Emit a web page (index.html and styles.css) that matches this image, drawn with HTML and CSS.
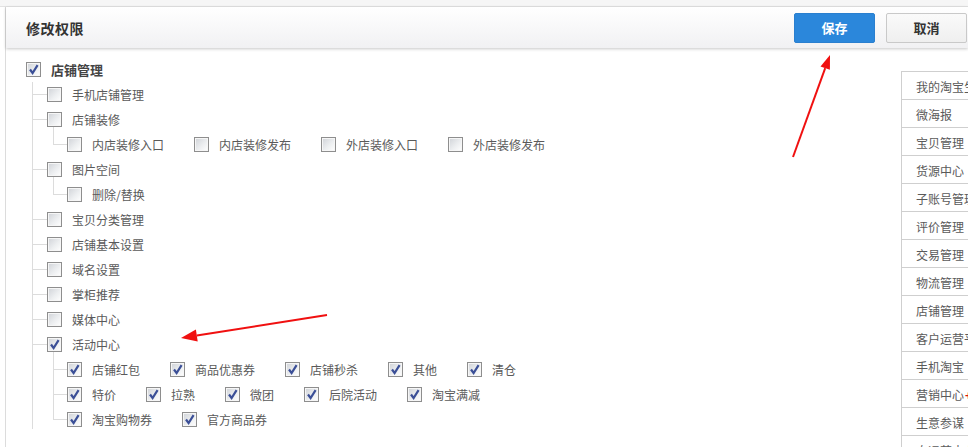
FILE: index.html
```html
<!DOCTYPE html>
<html lang="zh-CN">
<head>
<meta charset="utf-8">
<title>修改权限</title>
<link rel="stylesheet" href="styles.css">
</head>
<body>
<div class="topstrip"></div>
<div class="frame">
  <div class="header">
    <div class="title">修改权限</div>
    <div class="actions">
      <button class="btn save">保存</button>
      <button class="btn cancel">取消</button>
    </div>
  </div>
  <div class="content">
    <div class="tree">
      <div class="row root"><span class="cb on"><svg viewBox="0 0 13 13"><path d="M3 6.5 L5.6 10 L10.6 2.2"/></svg></span><span class="lbl bold">店铺管理</span></div>
      <ul class="l1">
        <li><div class="row"><span class="cb"></span><span class="lbl">手机店铺管理</span></div></li>
        <li><div class="row"><span class="cb"></span><span class="lbl">店铺装修</span></div>
          <ul class="l2">
            <li class="row">
              <span class="item"><span class="cb"></span><span class="lbl">内店装修入口</span></span>
              <span class="item"><span class="cb"></span><span class="lbl">内店装修发布</span></span>
              <span class="item"><span class="cb"></span><span class="lbl">外店装修入口</span></span>
              <span class="item"><span class="cb"></span><span class="lbl">外店装修发布</span></span>
            </li>
          </ul>
        </li>
        <li><div class="row"><span class="cb"></span><span class="lbl">图片空间</span></div>
          <ul class="l2">
            <li class="row"><span class="item"><span class="cb"></span><span class="lbl">删除/替换</span></span></li>
          </ul>
        </li>
        <li><div class="row"><span class="cb"></span><span class="lbl">宝贝分类管理</span></div></li>
        <li><div class="row"><span class="cb"></span><span class="lbl">店铺基本设置</span></div></li>
        <li><div class="row"><span class="cb"></span><span class="lbl">域名设置</span></div></li>
        <li><div class="row"><span class="cb"></span><span class="lbl">掌柜推荐</span></div></li>
        <li><div class="row"><span class="cb"></span><span class="lbl">媒体中心</span></div></li>
        <li><div class="row"><span class="cb on"><svg viewBox="0 0 13 13"><path d="M3 6.5 L5.6 10 L10.6 2.2"/></svg></span><span class="lbl">活动中心</span></div>
          <ul class="l2">
            <li class="row">
              <span class="item"><span class="cb on"><svg viewBox="0 0 13 13"><path d="M3 6.5 L5.6 10 L10.6 2.2"/></svg></span><span class="lbl">店铺红包</span></span>
              <span class="item"><span class="cb on"><svg viewBox="0 0 13 13"><path d="M3 6.5 L5.6 10 L10.6 2.2"/></svg></span><span class="lbl">商品优惠券</span></span>
              <span class="item"><span class="cb on"><svg viewBox="0 0 13 13"><path d="M3 6.5 L5.6 10 L10.6 2.2"/></svg></span><span class="lbl">店铺秒杀</span></span>
              <span class="item"><span class="cb on"><svg viewBox="0 0 13 13"><path d="M3 6.5 L5.6 10 L10.6 2.2"/></svg></span><span class="lbl">其他</span></span>
              <span class="item"><span class="cb on"><svg viewBox="0 0 13 13"><path d="M3 6.5 L5.6 10 L10.6 2.2"/></svg></span><span class="lbl">清仓</span></span>
            </li>
            <li class="row">
              <span class="item"><span class="cb on"><svg viewBox="0 0 13 13"><path d="M3 6.5 L5.6 10 L10.6 2.2"/></svg></span><span class="lbl">特价</span></span>
              <span class="item"><span class="cb on"><svg viewBox="0 0 13 13"><path d="M3 6.5 L5.6 10 L10.6 2.2"/></svg></span><span class="lbl">拉熟</span></span>
              <span class="item"><span class="cb on"><svg viewBox="0 0 13 13"><path d="M3 6.5 L5.6 10 L10.6 2.2"/></svg></span><span class="lbl">微团</span></span>
              <span class="item"><span class="cb on"><svg viewBox="0 0 13 13"><path d="M3 6.5 L5.6 10 L10.6 2.2"/></svg></span><span class="lbl">后院活动</span></span>
              <span class="item"><span class="cb on"><svg viewBox="0 0 13 13"><path d="M3 6.5 L5.6 10 L10.6 2.2"/></svg></span><span class="lbl">淘宝满减</span></span>
            </li>
            <li class="row">
              <span class="item"><span class="cb on"><svg viewBox="0 0 13 13"><path d="M3 6.5 L5.6 10 L10.6 2.2"/></svg></span><span class="lbl">淘宝购物券</span></span>
              <span class="item"><span class="cb on"><svg viewBox="0 0 13 13"><path d="M3 6.5 L5.6 10 L10.6 2.2"/></svg></span><span class="lbl">官方商品券</span></span>
            </li>
          </ul>
        </li>
      </ul>
    </div>
    <ul class="side">
      <li>我的淘宝生活</li>
      <li>微海报</li>
      <li>宝贝管理</li>
      <li>货源中心</li>
      <li>子账号管理</li>
      <li>评价管理</li>
      <li>交易管理</li>
      <li>物流管理</li>
      <li>店铺管理</li>
      <li>客户运营平台</li>
      <li>手机淘宝</li>
      <li>营销中心<span class="hot">+</span></li>
      <li>生意参谋</li>
      <li>自运营中心<span class="hot">+</span></li>
    </ul>
  </div>
</div>
<svg class="marks" width="968" height="447" viewBox="0 0 968 447">
  <line x1="793" y1="157" x2="825.2" y2="68.1" stroke="#f01010" stroke-width="2"/>
  <polygon points="830,55 829.9,69.8 820.5,66.4" fill="#f01010"/>
  <line x1="327" y1="315" x2="196.8" y2="335.5" stroke="#f01010" stroke-width="2"/>
  <polygon points="181,338 197.7,341.4 195.9,329.6" fill="#f01010"/>
</svg>
</body>
</html>
```

FILE: styles.css
```css
html, body {
  margin: 0;
  padding: 0;
  background: #fff;
  overflow: hidden;
  width: 968px;
  height: 447px;
}
body {
  font-family: "Noto Sans CJK SC", "Liberation Sans", sans-serif;
  font-size: 12px;
  color: #5a5a5a;
  position: relative;
}
.topstrip {
  height: 6px;
  background: #f6f6f6;
  border-bottom: 1px solid #e2e2e2;
}
.frame {
  margin-left: 5px;
  border-left: 1px solid #dcdcdc;
  height: 440px;
}
.header {
  height: 41px;
  display: flex;
  align-items: center;
  justify-content: space-between;
  padding-left: 20px;
  background: linear-gradient(#ffffff, #f1f1f3);
  box-shadow: 0 1px 3px rgba(0, 0, 0, 0.22);
  position: relative;
  z-index: 1;
}
.title {
  font-size: 14px;
  font-weight: bold;
  color: #333;
  letter-spacing: 0.5px;
}
.actions {
  display: flex;
  gap: 11px;
  margin-right: 1px;
}
.btn {
  width: 81px;
  height: 30px;
  font-family: "Noto Sans CJK SC", sans-serif;
  font-size: 13px;
  font-weight: bold;
  border-radius: 2px;
  padding: 0;
}
.save {
  background: #2b87db;
  border: 1px solid #2a7fcf;
  color: #fff;
}
.cancel {
  background: linear-gradient(#fafafa, #efefef);
  border: 1px solid #c9c9c9;
  color: #333;
}
.content {
  display: grid;
  grid-template-columns: 895px 160px;
}
.tree {
  padding: 9px 0 0 20px;
}
.row {
  height: 25px;
  display: flex;
  align-items: center;
}
.cb {
  width: 13px;
  height: 13px;
  border: 1px solid #8e8e8e;
  background: linear-gradient(135deg, #cfd2d7 0%, #eceef0 55%, #ffffff 100%);
  box-shadow: inset 0 0 0 1px #f6f6f6;
  display: inline-flex;
  flex-shrink: 0;
  margin-right: 10px;
}
.cb svg {
  width: 13px;
  height: 13px;
}
.cb svg path {
  fill: none;
  stroke: #3b4f97;
  stroke-width: 2.2;
}
.lbl {
  white-space: nowrap;
  line-height: 25px;
}
.bold {
  font-weight: bold;
  font-size: 13px;
  color: #444;
}
ul {
  list-style: none;
  margin: 0;
  padding: 0;
}
.l1 {
  margin-left: 6px;
  position: relative;
}
.l1::before {
  content: "";
  position: absolute;
  left: 0;
  top: 0;
  bottom: 3px;
  border-left: 1px solid #dcdcdc;
}
.l1 > li {
  position: relative;
  padding-left: 15px;
}
.l1 > li::after {
  content: "";
  position: absolute;
  left: 1px;
  width: 14px;
  top: 12px;
  border-top: 1px solid #dcdcdc;
}
.l2 {
  margin-left: 6px;
  position: relative;
}
.l2::before {
  content: "";
  position: absolute;
  left: 0;
  top: -5px;
  bottom: 12px;
  border-left: 1px solid #dcdcdc;
}
.l2 > li {
  position: relative;
  padding-left: 14px;
}
.l2 > li::after {
  content: "";
  position: absolute;
  left: 1px;
  width: 13px;
  top: 12px;
  border-top: 1px solid #dcdcdc;
}
.item {
  display: inline-flex;
  align-items: center;
  margin-right: 30px;
}
.side {
  margin-top: 23px;
  border-left: 1px solid #cfcfcf;
  border-top: 1px solid #cfcfcf;
  align-self: start;
}
.side li {
  height: 25px;
  padding-top: 2px;
  line-height: 25px;
  border-bottom: 1px solid #cfcfcf;
  padding-left: 14px;
  white-space: nowrap;
  color: #5a5a5a;
  font-size: 12px;
}
.hot {
  color: #e0100c;
  font-weight: bold;
  margin-left: 1px;
}
.marks {
  position: absolute;
  left: 0;
  top: 0;
  pointer-events: none;
}
```
